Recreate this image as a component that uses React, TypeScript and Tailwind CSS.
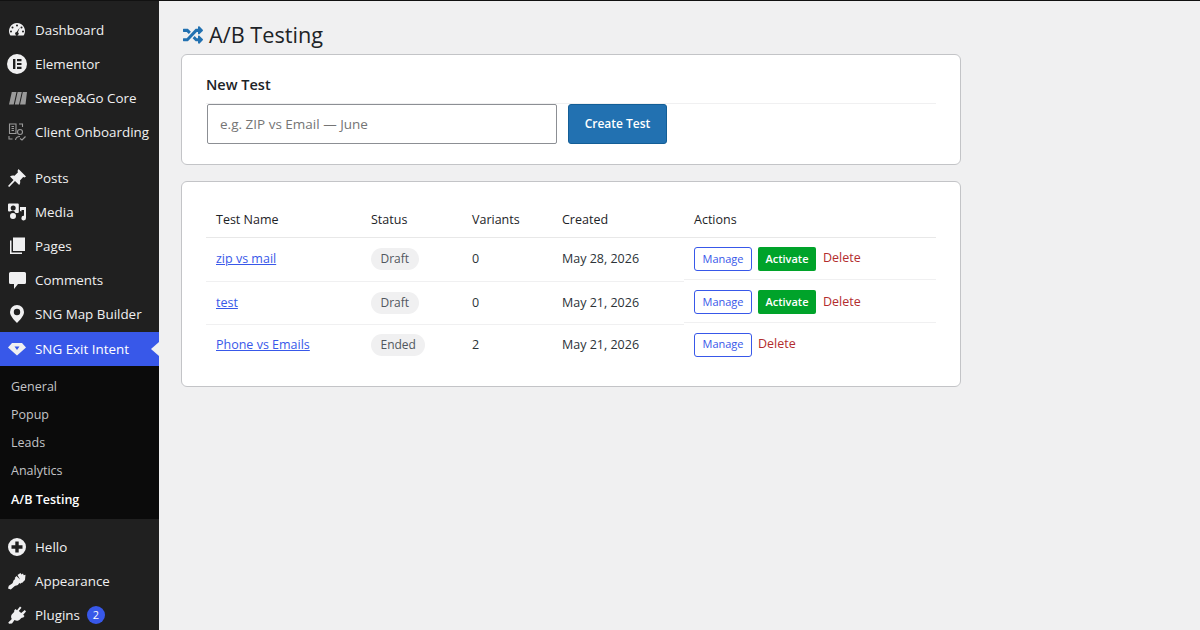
import React from 'react';
import { FaRandom } from 'react-icons/fa';

const font = "font-['Open_Sans','Noto_Sans',sans-serif]";

const icons: Record<string, React.ReactNode> = {
  dashboard: (
    <path fillRule="evenodd" d="M10 3a8 8 0 0 0-7 11.900c.3.5.8.6 1.200.6h11.600c.4 0 .9-.1 1.200-.6A8 8 0 0 0 10 3zM10 4.500a1 1 0 1 1 0 2 1 1 0 0 1 0-2zM5.500 6.500a1 1 0 1 1 0 2 1 1 0 0 1 0-2zM14.500 6.500a1 1 0 1 1 0 2 1 1 0 0 1 0-2zM4 10.500a1 1 0 1 1 0 2 1 1 0 0 1 0-2zM16 10.500a1 1 0 1 1 0 2 1 1 0 0 1 0-2zM12.800 7.500l-1.900 4.700a1.700 1.700 0 1 1-1.300-.3z" />
  ),
  elementor: (
    <path fillRule="evenodd" d="M10 0a10 10 0 1 0 0 20 10 10 0 0 0 0-20zM6 5h2.400v10H6zM10 5h4.500v2.200H10zM10 8.900h4.500v2.200H10zM10 12.800h4.500V15H10z" />
  ),
  sweep: <path d="M2 16.500 4.800 4H9.500L6.700 16.500zM7.800 16.500 10.600 4H14.800L12 16.500zM13 16.500 15.800 4H20L18.500 16.500z" />,
  posts: (
    <path d="M11.500 1 19 8.500l-1.500 1-1.300-.5-3.200 3.500c.5 1.700.2 3.200-.8 4.500L8 13 2.200 19l-1.200-1 5.500-6L3 8.500c1.300-1 2.800-1.300 4.500-.8L11 4.300l-.5-1.300z" />
  ),
  media: (
    <path fillRule="evenodd" d="M2 1.500h8.800a1 1 0 0 1 1 1V10a1 1 0 0 1-1 1H8.500a3.500 3.500 0 0 0-5.500-1.500H2a1 1 0 0 1-1-1V2.500a1 1 0 0 1 1-1zM6.200 3.500a2.500 2.500 0 1 0 0 5 2.500 2.500 0 0 0 0-5zM6 11a3 3 0 1 1 0 6 3 3 0 0 1 0-6zM13 5h6v11a2.300 2.300 0 1 1-2-2.200V8h-2.500v1.500L13 9z" />
  ),
  pages: <path d="M6 1.500h12v13.500H6zM3 4.500h1.500V16.500H15V18H3z" />,
  comments: <path d="M3.500 2h14a1.500 1.500 0 0 1 1.500 1.500v9a1.500 1.500 0 0 1-1.500 1.500h-6.500l-4 5v-5H3.500A1.500 1.500 0 0 1 2 12.500v-9A1.500 1.500 0 0 1 3.500 2z" />,
  pin: (
    <path fillRule="evenodd" d="M10 1a7 7 0 0 0-7 7c0 3.800 4 8 7 11 3-3 7-7.200 7-11a7 7 0 0 0-7-7zM10 4.800a3.200 3.200 0 1 1 0 6.400 3.200 3.200 0 0 1 0-6.400z" />
  ),
  gem: <path d="M5 4h10l4 4.500-9 8-9-8zM7.500 7.500 10 11l2.500-3.500z" fillRule="evenodd" />,
  hello: (
    <path fillRule="evenodd" d="M10 1a9 9 0 1 0 0 18 9 9 0 0 0 0-18zM8.300 4.500h3.400v3.800h3.800v3.400h-3.800v3.800H8.300v-3.800H4.500V8.300h3.800z" />
  ),
  appearance: (
    <path d="M10.500 4 13.500 2l1 1.500 1.500-1 .7 1.700 1.800-.4-.5 5.200-3 3zM9.500 5l6 6-2.200 1.700-1-.7-1.200 1.700c-1 1-2.500.7-3.600 1.500L3.800 18.500 1 17.500l.8-2.800 3.400-2.300c1-.7.8-2.200 1.500-3.100l1.500-1.200-.5-1.200z" />
  ),
  plugins: (
    <path d="M13 1.500l1.500 1.200-2.700 3.300 2.400 2L17.800 5l1.200 1.500-2.800 3.300 1.300 1.200-1.200 1.500-1.500.2c-1 .6-1.800 1.800-3 2.500-1.500.8-3 .6-4.300-.2L5 18.500 2 18.800l-.7-1.300L4.800 14c-.8-1.300-1-2.800-.2-4.300.7-1.200 2-2 2.600-3l.1-1.500L8.500 4l1.500 1.300z" />
  ),
};

function MenuIcon({ name }: { name: string }) {
  if (name === 'client') {
    return (
      <svg width="20" height="20" viewBox="0 0 20 20" fill="none" stroke="#9a9a9a" strokeWidth="1.100">
        <path d="M2.500 2h6.500v9.500H2.500zM4.500 4.500h2.500M4.500 6.500h2.500M4.500 8.500h2.500" />
        <path d="M12 2h3.500v3M2 14v3h3.500" />
        <circle cx="13" cy="10" r="2.500" />
        <path d="M8.500 18c.3-2.500 2-3.500 4.500-3.500M13 16.500l2 1.500 3.500-3.500" />
      </svg>
    );
  }
  return (
    <svg width="20" height="20" viewBox="0 0 20 20" fill={name === 'sweep' ? '#9a9a9a' : '#f0f0f1'}>
      {icons[name]}
    </svg>
  );
}

function MenuItem({ icon, label, active, badge }: { icon: string; label: string; active?: boolean; badge?: string }) {
  return (
    <div className={`relative flex h-[34px] items-center pl-[7px] text-[#f0f0f1] ${active ? 'bg-[#3858e9] text-white' : ''}`}>
      <MenuIcon name={icon} />
      <span className="ml-2 text-[13.400px] whitespace-nowrap">{label}</span>
      {badge && (
        <span className="ml-[7px] flex h-[18px] w-[18px] items-center justify-center rounded-full bg-[#3858e9] text-[11px] text-white">
          {badge}
        </span>
      )}
      {active && (
        <span className="absolute right-0 top-[10px] border-y-[7px] border-r-[8px] border-y-transparent border-r-[#f0f0f1]" />
      )}
    </div>
  );
}

function Sidebar() {
  return (
    <aside className="h-[630px] w-[159px] shrink-0 overflow-hidden bg-[#202020] pt-[12px]">
      <MenuItem icon="dashboard" label="Dashboard" />
      <MenuItem icon="elementor" label="Elementor" />
      <MenuItem icon="sweep" label="Sweep&Go Core" />
      <MenuItem icon="client" label="Client Onboarding" />
      <div className="h-3" />
      <MenuItem icon="posts" label="Posts" />
      <MenuItem icon="media" label="Media" />
      <MenuItem icon="pages" label="Pages" />
      <MenuItem icon="comments" label="Comments" />
      <MenuItem icon="pin" label="SNG Map Builder" />
      <div className="pt-px" />
      <MenuItem icon="gem" label="SNG Exit Intent" active />
      <div className="bg-[#0b0b0b] pb-[5px] pt-[7px] text-[12.500px] text-[#c3c4c7]">
        <div className="flex h-7 items-center pl-[11px]">General</div>
        <div className="flex h-7 items-center pl-[11px]">Popup</div>
        <div className="flex h-7 items-center pl-[11px]">Leads</div>
        <div className="flex h-7 items-center pl-[11px]">Analytics</div>
        <div className="flex h-[29px] items-center pl-[11px] pt-[2px] font-semibold text-white">A/B Testing</div>
      </div>
      <div className="h-[11px]" />
      <MenuItem icon="hello" label="Hello" />
      <MenuItem icon="appearance" label="Appearance" />
      <MenuItem icon="plugins" label="Plugins" badge="2" />
    </aside>
  );
}

type Row = { name: string; status: string; variants: number; created: string; canActivate: boolean; height: string };

const rows: Row[] = [
  { name: 'zip vs mail', status: 'Draft', variants: 0, created: 'May 28, 2026', canActivate: true, height: 'h-[44px]' },
  { name: 'test', status: 'Draft', variants: 0, created: 'May 21, 2026', canActivate: true, height: 'h-[43px]' },
  { name: 'Phone vs Emails', status: 'Ended', variants: 2, created: 'May 21, 2026', canActivate: false, height: 'h-[42px]' },
];

function TestRow({ row, last }: { row: Row; last: boolean }) {
  const line = last ? '' : 'border-b border-[#f0f0f1]';
  return (
    <tr className="text-[12.500px] text-[#2c3338]">
      <td className={`${row.height} pl-[10px] pt-px ${line}`}>
        <a className="text-[#3858e9] underline">{row.name}</a>
      </td>
      <td className={`pl-[10px] ${line}`}>
        <span className="inline-flex h-[22px] items-center rounded-full bg-[#f0f0f1] px-[9.500px] text-[12px] text-[#50575e]">
          {row.status}
        </span>
      </td>
      <td className={`pl-[10px] pt-px ${line}`}>{row.variants}</td>
      <td className={`pl-[10px] pt-px ${line}`}>{row.created}</td>
      <td className="relative pb-px pl-[10px]">
        <div className="flex items-center gap-[6px]">
          <button className="flex h-6 w-[58px] items-center justify-center rounded-[3px] border border-[#3858e9] bg-white text-[11px] text-[#3858e9]">
            Manage
          </button>
          {row.canActivate && (
            <button className="flex h-6 w-[58px] items-center justify-center rounded-[2px] bg-[#00a32a] text-[11px] font-semibold text-white">
              Activate
            </button>
          )}
          <a className={`${row.canActivate ? 'ml-px' : ''} text-[12.500px] text-[#b32d2e]`}>Delete</a>
        </div>
        {!last && <span className="absolute inset-x-0 bottom-px h-px bg-[#f0f0f1]" />}
      </td>
    </tr>
  );
}

export default function App() {
  return (
    <div className={`flex h-[630px] w-[1200px] overflow-hidden border-t border-[#111] bg-[#f0f0f1] ${font}`}>
      <Sidebar />
      <main className="w-[802px] pl-[22px]">
        <h1 className="flex h-[53px] items-center gap-[6px] pl-[2px] pt-[15px] text-[21.700px] text-[#1d2327]">
          <FaRandom size={20} color="#2271b1" />
          A/B Testing
        </h1>
        <section className="h-[111px] w-[780px] rounded-[6px] border border-[#c3c4c7] bg-white px-6 pt-[18px]">
          <h2 className="h-[31px] border-b border-[#f0f0f1] pt-px text-[14.500px] font-semibold text-[#1d2327]">New Test</h2>
          <div className="flex gap-[11px] pl-px">
            <input
              placeholder="e.g. ZIP vs Email — June"
              className="h-10 w-[350px] rounded-[2px] border border-[#8c8f94] bg-white px-3 text-[13.500px] text-[#2c3338] placeholder:text-[#757575]"
            />
            <button className="flex h-10 w-[99px] items-center justify-center rounded-[3px] border border-[#135e96] bg-[#2271b1] text-[12px] font-semibold text-white">
              Create Test
            </button>
          </div>
        </section>
        <section className="mt-4 h-[206px] w-[780px] rounded-[6px] border border-[#c3c4c7] bg-white px-6 pt-[18px]">
          <table className="w-[730px] table-fixed border-collapse">
            <colgroup>
              <col className="w-[155px]" />
              <col className="w-[101px]" />
              <col className="w-[90px]" />
              <col className="w-[132px]" />
              <col />
            </colgroup>
            <thead>
              <tr className="text-left text-[12.500px] text-[#1d2327]">
                <th className="h-[37px] border-b border-[#e8e8e8] pl-[10px] pt-1 font-medium">Test Name</th>
                <th className="border-b border-[#e8e8e8] pl-[10px] pt-1 font-medium">Status</th>
                <th className="border-b border-[#e8e8e8] pl-[10px] pt-1 font-medium">Variants</th>
                <th className="border-b border-[#e8e8e8] pl-[10px] pt-1 font-medium">Created</th>
                <th className="border-b border-[#e8e8e8] pl-[10px] pt-1 font-medium">Actions</th>
              </tr>
            </thead>
            <tbody>
              {rows.map((row, i) => (
                <TestRow key={row.name} row={row} last={i === rows.length - 1} />
              ))}
            </tbody>
          </table>
        </section>
      </main>
    </div>
  );
}
